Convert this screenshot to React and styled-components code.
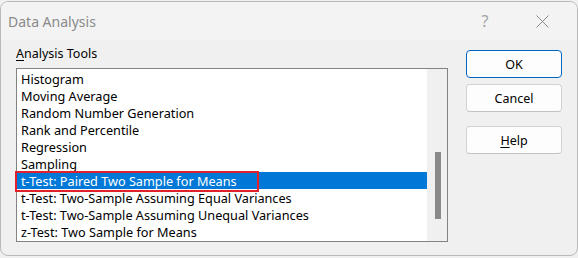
import React from "react";
import styled, { createGlobalStyle } from "styled-components";

const Global = createGlobalStyle`
  html, body { margin: 0; padding: 0; background: #f0f0f0; }
  body { font-family: "Noto Sans", "Open Sans", sans-serif; }
  #root { width: 578px; height: 258px; overflow: hidden; }
`;

const Window = styled.div`
  box-sizing: border-box;
  margin-top: 1px;
  width: 578px;
  height: 255px;
  border: 1px solid #b9b9b9;
  border-radius: 8px;
  overflow: hidden;
  display: flex;
  flex-direction: column;
  background: #f0f0f0;
`;

const TitleBar = styled.div`
  height: 38px;
  flex: none;
  display: flex;
  align-items: center;
  background: #f3f3f3;
  padding-left: 7px;
`;

const Title = styled.div`
  flex: 1;
  font-size: 14px;
  color: #8a8a8a;
  margin-top: 1px;
`;

const TitleButton = styled.div`
  width: ${(p) => p.$w}px;
  height: 38px;
  display: flex;
  align-items: center;
  justify-content: center;
  color: #a3a3a3;
  font-size: 16px;
`;

const Body = styled.div`
  flex: 1;
  display: flex;
  padding: 5px 0 0 15px;
`;

const LeftCol = styled.div`
  width: 432px;
  display: flex;
  flex-direction: column;
`;

const Label = styled.div`
  height: 17px;
  line-height: 17px;
  font-size: 12.5px;
  color: #000;
  margin-bottom: 6px;
`;

const U = styled.span`
  text-decoration: underline;
  text-underline-offset: 2px;
`;

const ListBox = styled.div`
  box-sizing: border-box;
  width: 432px;
  height: 174px;
  border: 1px solid #838383;
  display: flex;
  background: #fff;
`;

const Items = styled.div`
  flex: 1;
  padding-top: 1px;
  position: relative;
`;

const Item = styled.div`
  height: 17px;
  line-height: 18px;
  font-size: 12.7px;
  padding-left: 4px;
  white-space: nowrap;
  overflow: hidden;
  color: ${(p) => (p.$selected ? "#fff" : "#000")};
  background: ${(p) => (p.$selected ? "#0078d7" : "transparent")};
`;

const Highlight = styled.div`
  position: absolute;
  left: -2px;
  top: 102px;
  width: 244px;
  height: 21px;
  box-sizing: border-box;
  border: 2px solid #e0202a;
  pointer-events: none;
`;

const Track = styled.div`
  width: 20px;
  background: #f0f0f0;
  display: flex;
  justify-content: center;
`;

const Thumb = styled.div`
  width: 6px;
  height: 67px;
  margin-top: 83px;
  margin-left: 1px;
  background: #8a8a8a;
`;

const RightCol = styled.div`
  margin-left: 18px;
  padding-top: 5px;
  width: 96px;
  display: flex;
  flex-direction: column;
`;

const Button = styled.div`
  box-sizing: border-box;
  height: 28px;
  border-radius: 4px;
  background: #fdfdfd;
  border: 1px solid ${(p) => (p.$primary ? "#0067c0" : "#d3d3d3")};
  border-bottom-color: ${(p) => (p.$primary ? "#0067c0" : "#c2c2c2")};
  display: flex;
  align-items: center;
  justify-content: center;
  font-size: 12.5px;
  color: #000;
  margin-top: ${(p) => p.$gap}px;
`;

const items = [
  "Histogram",
  "Moving Average",
  "Random Number Generation",
  "Rank and Percentile",
  "Regression",
  "Sampling",
  "t-Test: Paired Two Sample for Means",
  "t-Test: Two-Sample Assuming Equal Variances",
  "t-Test: Two-Sample Assuming Unequal Variances",
  "z-Test: Two Sample for Means",
];

export default function App() {
  return (
    <>
      <Global />
      <Window>
        <TitleBar>
          <Title>Data Analysis</Title>
          <TitleButton $w={44}>?</TitleButton>
          <TitleButton $w={70}>
            <svg width="13" height="13" viewBox="0 0 13 13">
              <path d="M0.5 0.5 L12.5 12.5 M12.5 0.5 L0.5 12.5" stroke="#8a8a8a" strokeWidth="1" fill="none" />
            </svg>
          </TitleButton>
        </TitleBar>
        <Body>
          <LeftCol>
            <Label>
              <U>A</U>nalysis Tools
            </Label>
            <ListBox>
              <Items>
                {items.map((t, i) => (
                  <Item key={t} $selected={i === 6}>
                    {t}
                  </Item>
                ))}
                <Highlight />
              </Items>
              <Track>
                <Thumb />
              </Track>
            </ListBox>
          </LeftCol>
          <RightCol>
            <Button $primary $gap={0}>OK</Button>
            <Button $gap={6}>Cancel</Button>
            <Button $gap={14}>
              <span>
                <U>H</U>elp
              </span>
            </Button>
          </RightCol>
        </Body>
      </Window>
    </>
  );
}
